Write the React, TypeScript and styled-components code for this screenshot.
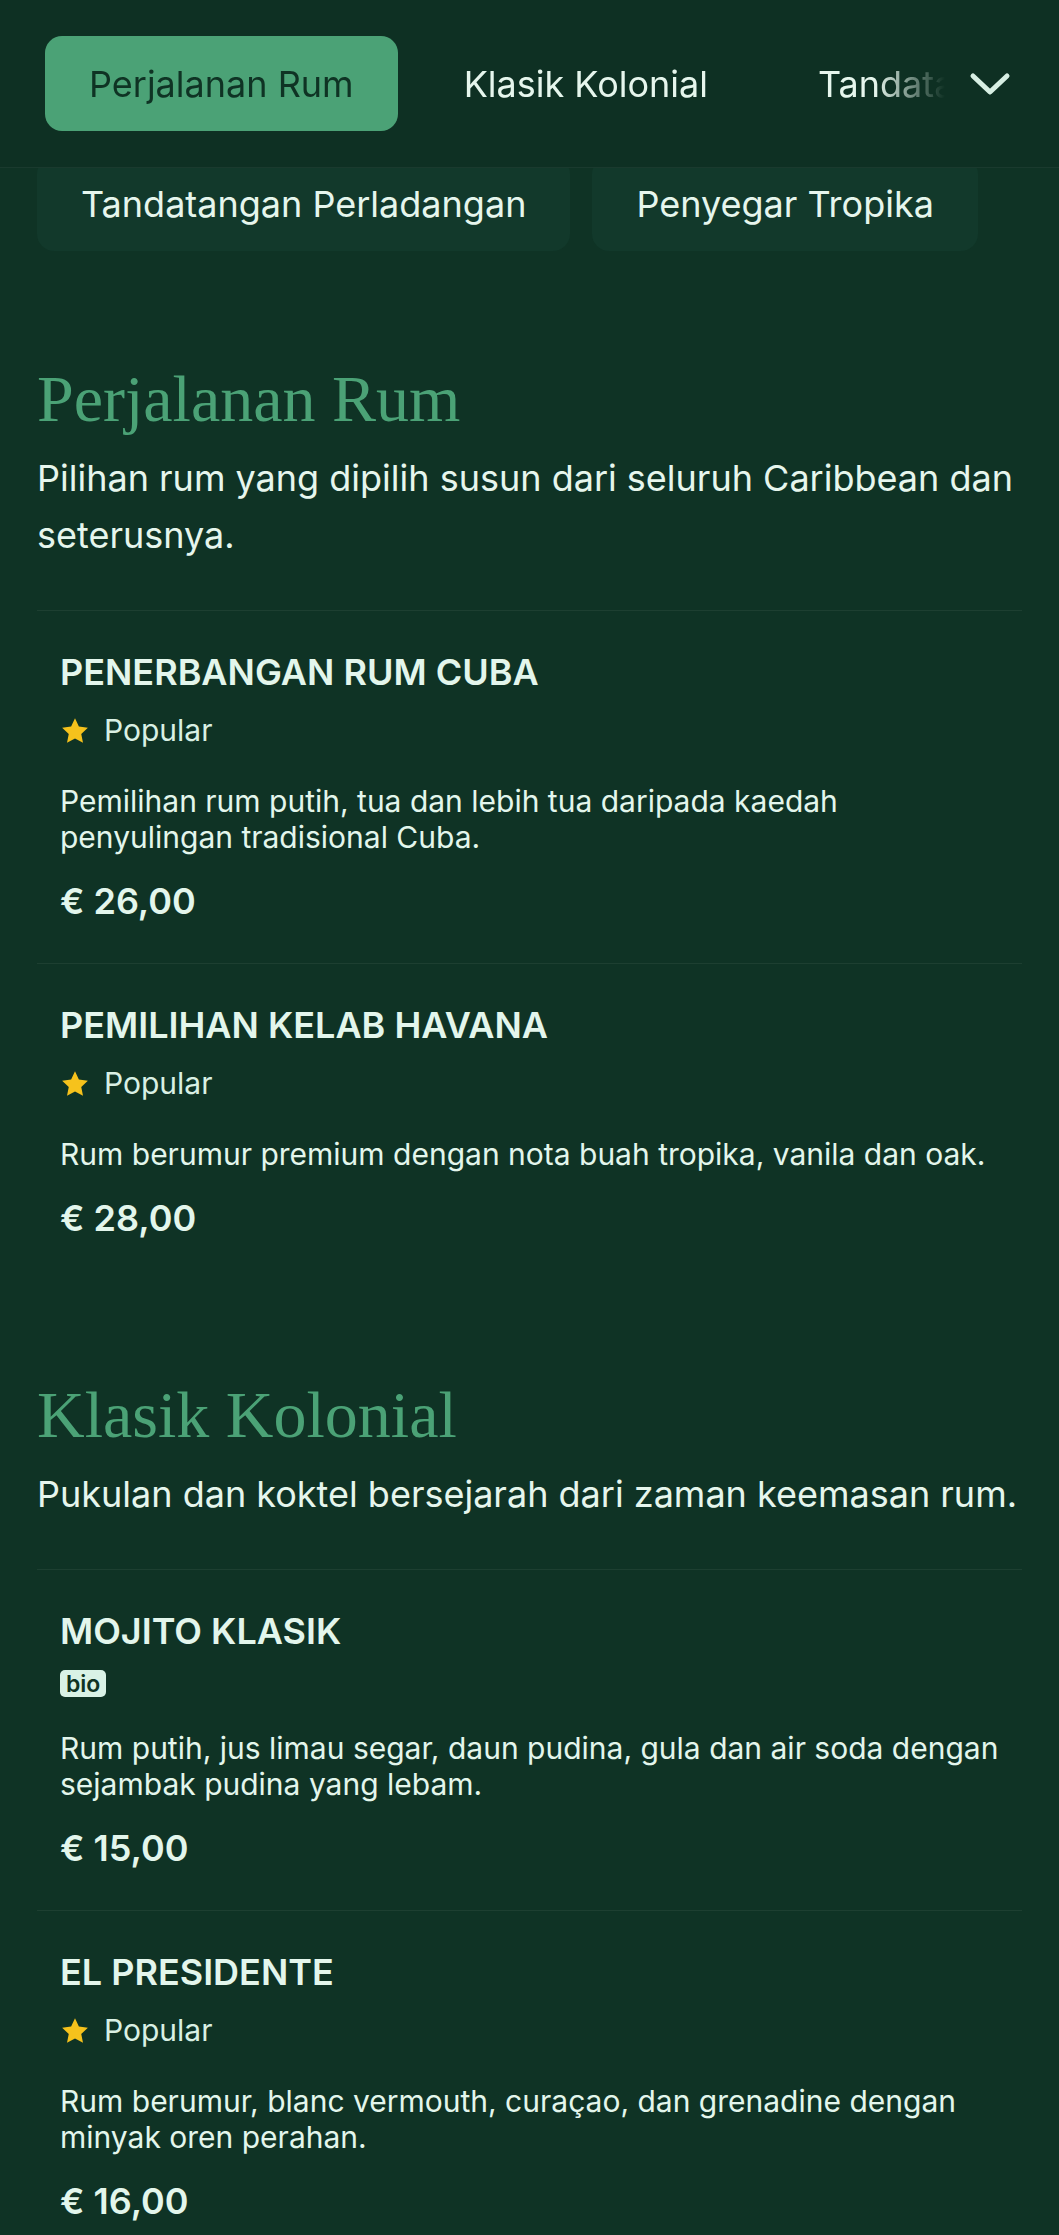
import React from "react";
import styled, { createGlobalStyle } from "styled-components";

type MenuItem = {
  name: string;
  tag: "popular" | "bio";
  description: string;
  price: string;
};

type MenuSection = {
  title: string;
  intro: string;
  items: MenuItem[];
};

const tabs = ["Perjalanan Rum", "Klasik Kolonial", "Tandatangan Perladangan", "Penyegar Tropika"];
const chips = ["Tandatangan Perladangan", "Penyegar Tropika"];

const sections: MenuSection[] = [
  {
    title: "Perjalanan Rum",
    intro: "Pilihan rum yang dipilih susun dari seluruh Caribbean dan seterusnya.",
    items: [
      {
        name: "PENERBANGAN RUM CUBA",
        tag: "popular",
        description: "Pemilihan rum putih, tua dan lebih tua daripada kaedah penyulingan tradisional Cuba.",
        price: "€ 26,00",
      },
      {
        name: "PEMILIHAN KELAB HAVANA",
        tag: "popular",
        description: "Rum berumur premium dengan nota buah tropika, vanila dan oak.",
        price: "€ 28,00",
      },
    ],
  },
  {
    title: "Klasik Kolonial",
    intro: "Pukulan dan koktel bersejarah dari zaman keemasan rum.",
    items: [
      {
        name: "MOJITO KLASIK",
        tag: "bio",
        description: "Rum putih, jus limau segar, daun pudina, gula dan air soda dengan sejambak pudina yang lebam.",
        price: "€ 15,00",
      },
      {
        name: "EL PRESIDENTE",
        tag: "popular",
        description: "Rum berumur, blanc vermouth, curaçao, dan grenadine dengan minyak oren perahan.",
        price: "€ 16,00",
      },
    ],
  },
];

const GlobalStyle = createGlobalStyle`
  body {
    margin: 0;
    background: #0f3325;
    font-family: Inter, "Noto Sans", sans-serif;
    color: #e3f6ec;
  }
`;

const Star = () => (
  <svg width="30" height="30" viewBox="0 0 24 24">
    <path
      d="M12 1.8l3.1 6.6 7.2.9-5.3 5 1.4 7.1L12 17.9l-6.4 3.5 1.4-7.1-5.3-5 7.2-.9z"
      fill="#f6c21c"
    />
  </svg>
);

const Chevron = () => (
  <svg width="42" height="24" viewBox="0 0 42 24">
    <path d="M4 4l17 16L38 4" fill="none" stroke="#d7efe3" strokeWidth="5" strokeLinecap="round" strokeLinejoin="round" />
  </svg>
);

const App = () => {
  return (
    <>
      <GlobalStyle />
      <Page>
        <Header>
          <TabStrip>
            {tabs.map((t, i) => (
              <Tab key={t} $active={i === 0}>
                {t}
              </Tab>
            ))}
          </TabStrip>
          <ExpandButton>
            <Chevron />
          </ExpandButton>
        </Header>

        <ChipGrid>
          {chips.map((c) => (
            <Chip key={c}>{c}</Chip>
          ))}
        </ChipGrid>

        {sections.map((s) => (
          <Section key={s.title}>
            <SectionTitle>{s.title}</SectionTitle>
            <SectionIntro>{s.intro}</SectionIntro>
            <ItemList>
              {s.items.map((item) => (
                <Item key={item.name}>
                  <ItemName>{item.name}</ItemName>
                  {item.tag === "popular" ? (
                    <PopularRow>
                      <Star />
                      <span>Popular</span>
                    </PopularRow>
                  ) : (
                    <BadgeRow>
                      <Badge>bio</Badge>
                    </BadgeRow>
                  )}
                  <ItemDescription>{item.description}</ItemDescription>
                  <Price>{item.price}</Price>
                </Item>
              ))}
            </ItemList>
          </Section>
        ))}
      </Page>
    </>
  );
};

export default App;

const Page = styled.div`
  min-height: 100vh;
  background: #0f3325;
`;

const Header = styled.header`
  position: sticky;
  top: 0;
  z-index: 10;
  display: flex;
  align-items: center;
  height: 167px;
  padding: 0 24px 0 45px;
  background: #0e3023;
  border-bottom: 1px solid rgba(255, 255, 255, 0.05);
`;

const TabStrip = styled.nav`
  flex: 1;
  display: flex;
  gap: 22px;
  overflow: hidden;
  -webkit-mask-image: linear-gradient(to right, #000 calc(100% - 70px), transparent);
  mask-image: linear-gradient(to right, #000 calc(100% - 70px), transparent);
`;

const Tab = styled.div<{ $active?: boolean }>`
  flex-shrink: 0;
  display: flex;
  align-items: center;
  height: 95px;
  padding: 0 44px;
  border-radius: 17px;
  font-size: 36px;
  white-space: nowrap;
  background: ${(p) => (p.$active ? "#4ba276" : "transparent")};
  color: ${(p) => (p.$active ? "#0f3324" : "#e6f6ed")};
`;

const ExpandButton = styled.div`
  display: flex;
  align-items: center;
  justify-content: center;
  width: 90px;
  height: 95px;
`;

const ChipGrid = styled.div`
  display: flex;
  flex-wrap: wrap;
  gap: 22px;
  margin-top: -11px;
  padding: 0 37px;
`;

const Chip = styled.div`
  display: flex;
  align-items: center;
  height: 94px;
  padding: 0 44px;
  border-radius: 17px;
  background: #12392b;
  font-size: 36px;
  color: #e6f6ed;
  white-space: nowrap;
`;

const Section = styled.section`
  padding: 96px 37px 0;

  &:first-of-type {
    padding-top: 109px;
  }
`;

const SectionTitle = styled.h2`
  margin: 0;
  font-family: "Liberation Serif", "DejaVu Serif", serif;
  font-weight: 400;
  font-size: 66px;
  line-height: 78px;
  color: #4ba276;
`;

const SectionIntro = styled.p`
  margin: 12px 0 46px;
  font-size: 36px;
  line-height: 57px;
  color: #e6f6ed;
`;

const ItemList = styled.div`
  display: flex;
  flex-direction: column;
`;

const Item = styled.article`
  padding: 40px 23px;
  border-top: 1px solid rgba(255, 255, 255, 0.06);
`;

const ItemName = styled.h3`
  margin: 0;
  font-size: 36px;
  font-weight: 600;
  line-height: 42px;
  color: #e3f6ec;
`;

const PopularRow = styled.div`
  display: flex;
  align-items: center;
  gap: 14px;
  margin-top: 18px;
  font-size: 30px;
  line-height: 39px;
  color: #d9f0e4;
`;

const BadgeRow = styled.div`
  display: flex;
  margin-top: 18px;
`;

const Badge = styled.span`
  display: inline-flex;
  align-items: center;
  height: 27px;
  padding: 0 6px;
  border-radius: 5px;
  background: #d9f2e6;
  color: #0f3324;
  font-size: 23px;
  font-weight: 600;
`;

const ItemDescription = styled.p`
  margin: 33px 0 0;
  font-size: 30px;
  line-height: 36px;
  color: #e3f6ec;
`;

const Price = styled.div`
  margin-top: 24px;
  font-size: 36px;
  font-weight: 600;
  line-height: 44px;
  color: #e3f6ec;
`;
